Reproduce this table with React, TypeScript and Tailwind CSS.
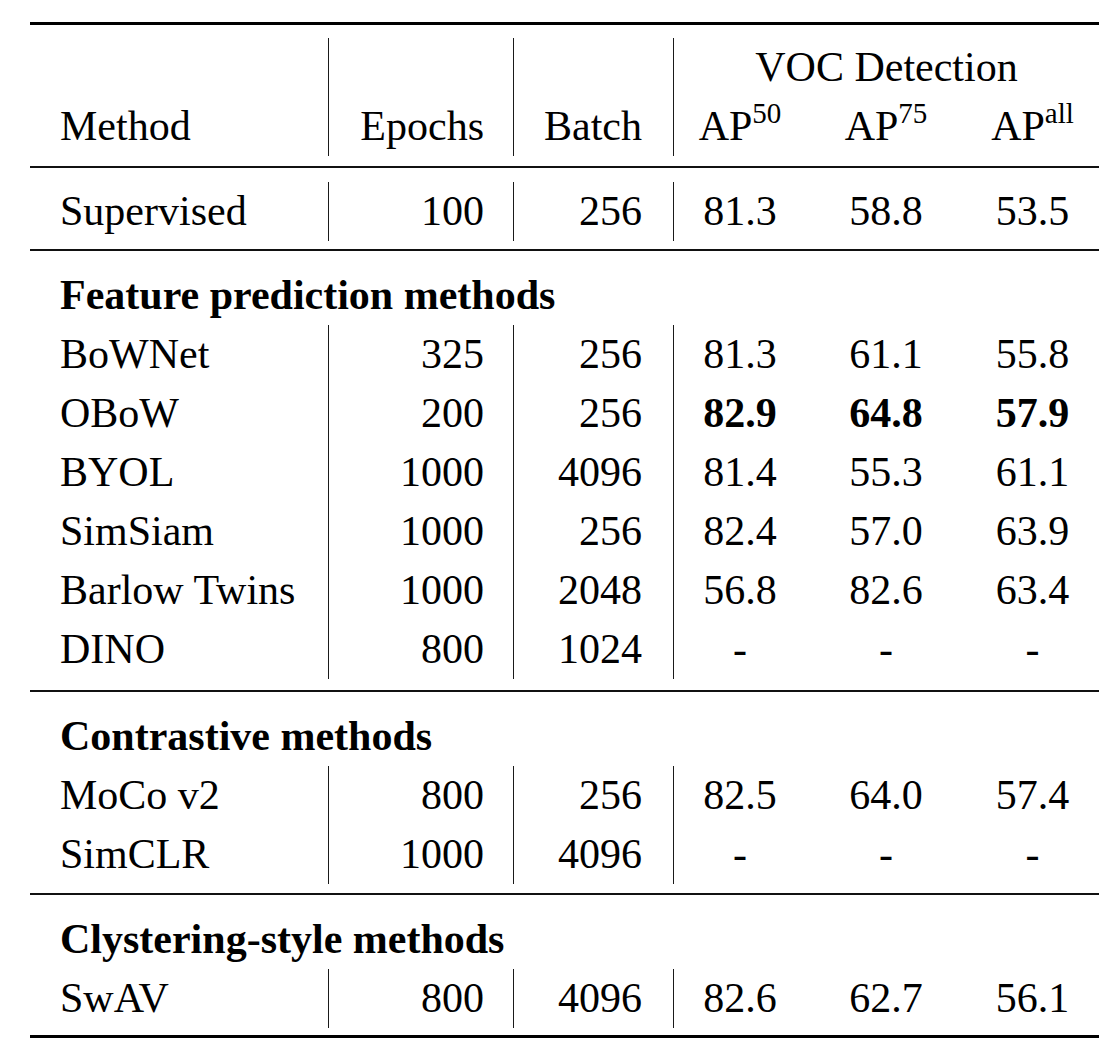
import React from "react";

const GRID = "grid grid-cols-[298px_185px_160px_133px_160px_133px]";
const ROW = `${GRID} h-[59px] leading-[59px]`;
const C1 = "pl-[30px] whitespace-nowrap";
const C2 = "border-l border-[#1a1a1a] text-right pr-[29px]";
const C3 = "border-l border-[#1a1a1a] text-right pr-[31px]";
const C4 = "border-l border-[#1a1a1a] text-center";
const C5 = "text-center";

type Row = {
  name: string;
  epochs: string;
  batch: string;
  ap: [string, string, string];
  bold?: boolean;
};

function DataRow({ r }: { r: Row }) {
  const apCls = r.bold ? "font-bold" : "";
  return (
    <div className={ROW}>
      <div className={C1}>{r.name}</div>
      <div className={C2}>{r.epochs}</div>
      <div className={C3}>{r.batch}</div>
      <div className={`${C4} ${apCls}`}>{r.ap[0]}</div>
      <div className={`${C5} ${apCls}`}>{r.ap[1]}</div>
      <div className={`${C5} ${apCls}`}>{r.ap[2]}</div>
    </div>
  );
}

function GroupTitle({ children }: { children: React.ReactNode }) {
  return (
    <div className="h-[59px] leading-[59px] pl-[30px] font-bold whitespace-nowrap">
      {children}
    </div>
  );
}

function AP({ sup }: { sup: string }) {
  return (
    <span>
      AP
      <span className="text-[29px] leading-none align-[17px]">{sup}</span>
    </span>
  );
}

const Thick = ({ className = "" }: { className?: string }) => (
  <div className={`h-[3px] bg-black ${className}`} />
);
const Mid = ({ className = "" }: { className?: string }) => (
  <div className={`h-[2px] bg-[#111] ${className}`} />
);

const feature: Row[] = [
  { name: "BoWNet", epochs: "325", batch: "256", ap: ["81.3", "61.1", "55.8"] },
  { name: "OBoW", epochs: "200", batch: "256", ap: ["82.9", "64.8", "57.9"], bold: true },
  { name: "BYOL", epochs: "1000", batch: "4096", ap: ["81.4", "55.3", "61.1"] },
  { name: "SimSiam", epochs: "1000", batch: "256", ap: ["82.4", "57.0", "63.9"] },
  { name: "Barlow Twins", epochs: "1000", batch: "2048", ap: ["56.8", "82.6", "63.4"] },
  { name: "DINO", epochs: "800", batch: "1024", ap: ["-", "-", "-"] },
];

const contrastive: Row[] = [
  { name: "MoCo v2", epochs: "800", batch: "256", ap: ["82.5", "64.0", "57.4"] },
  { name: "SimCLR", epochs: "1000", batch: "4096", ap: ["-", "-", "-"] },
];

const clustering: Row[] = [
  { name: "SwAV", epochs: "800", batch: "4096", ap: ["82.6", "62.7", "56.1"] },
];

export default function App() {
  return (
    <div className="w-[1120px] h-[1059px] bg-white text-black overflow-hidden">
      <div
        className="ml-[30px] w-[1069px] pt-[22px] flex flex-col text-[42px]"
        style={{ fontFamily: '"Liberation Serif", "Times New Roman", serif' }}
      >
        <Thick />
        <div className="mt-[13px]">
          <div className={ROW}>
            <div className={C1}></div>
            <div className={C2}></div>
            <div className={C3}></div>
            <div className={`${C4} col-span-3 whitespace-nowrap`}>VOC Detection</div>
          </div>
          <div className={ROW}>
            <div className={C1}>Method</div>
            <div className={C2}>Epochs</div>
            <div className={C3}>Batch</div>
            <div className={C4}>
              <AP sup="50" />
            </div>
            <div className={C5}>
              <AP sup="75" />
            </div>
            <div className={C5}>
              <AP sup="all" />
            </div>
          </div>
        </div>
        <Mid className="mt-[10px]" />
        <div className="mt-[14px]">
          <DataRow
            r={{ name: "Supervised", epochs: "100", batch: "256", ap: ["81.3", "58.8", "53.5"] }}
          />
        </div>
        <Mid className="mt-[8px]" />
        <div className="mt-[15px]">
          <GroupTitle>Feature prediction methods</GroupTitle>
          {feature.map((r) => (
            <DataRow key={r.name} r={r} />
          ))}
        </div>
        <Mid className="mt-[11px]" />
        <div className="mt-[15px]">
          <GroupTitle>Contrastive methods</GroupTitle>
          {contrastive.map((r) => (
            <DataRow key={r.name} r={r} />
          ))}
        </div>
        <Mid className="mt-[9px]" />
        <div className="mt-[15px]">
          <GroupTitle>Clystering-style methods</GroupTitle>
          {clustering.map((r) => (
            <DataRow key={r.name} r={r} />
          ))}
        </div>
        <Thick className="mt-[7px]" />
      </div>
    </div>
  );
}
